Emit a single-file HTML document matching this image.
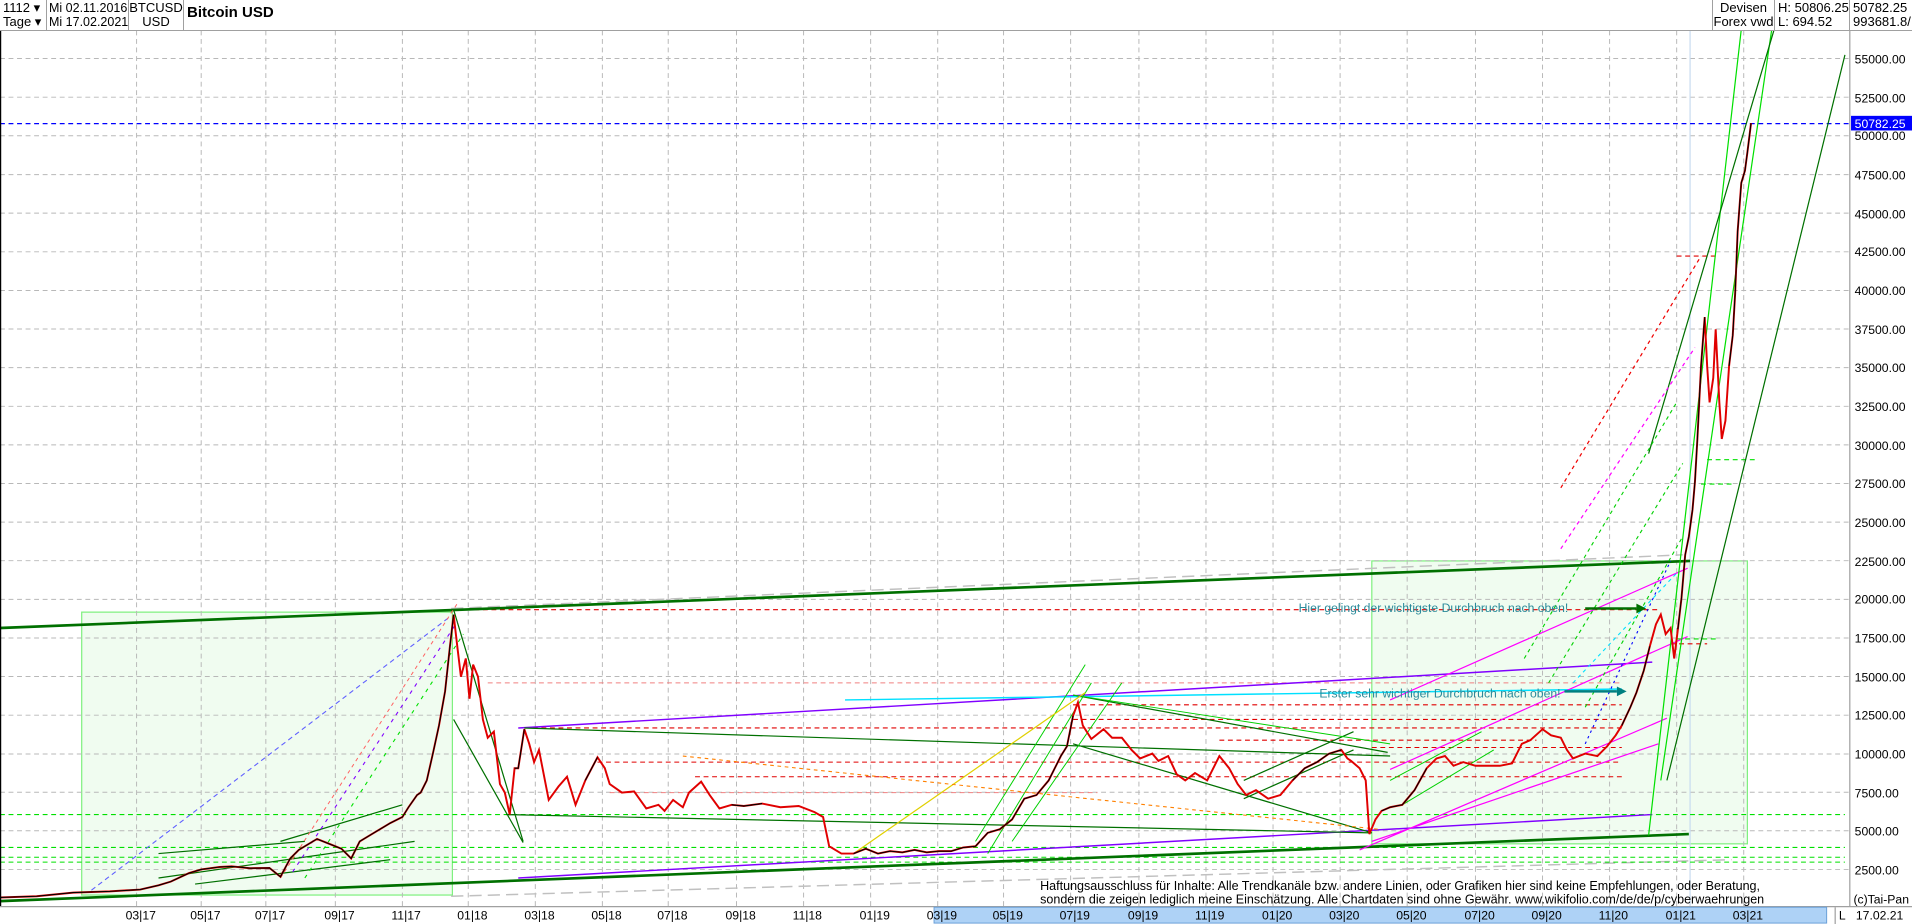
<!DOCTYPE html>
<html><head><meta charset="utf-8"><style>
html,body{margin:0;padding:0;background:#fff;width:1912px;height:924px;overflow:hidden;font-family:"Liberation Sans",sans-serif}
#hdr{position:absolute;left:0;top:0;width:1912px;height:30px;background:#fff;border-bottom:1px solid #a0a0a0;font-size:13px;color:#000}
.c{position:absolute;top:0;height:30px;border-right:1px solid #a0a0a0;line-height:14px;box-sizing:border-box;padding-top:1px;white-space:nowrap;overflow:hidden}
svg{position:absolute;left:0;top:0}
</style></head><body>
<svg width="1912" height="924" viewBox="0 0 1568 757.75" preserveAspectRatio="none" font-family="Liberation Sans, sans-serif">
<rect width="1568" height="758" fill="#fff"/>
<rect x="67" y="502" width="304" height="232" fill="#f0fcf0" stroke="#80f080" stroke-width="1"/>
<rect x="1125" y="460" width="308" height="232" fill="#f0fcf0" stroke="#80f080" stroke-width="1"/>
<g stroke="#b8b8b8" stroke-width="0.8" stroke-dasharray="4,3">
<path d="M0 48H1517M0 79.7H1517M0 111.3H1517M0 143.2H1517M0 174.8H1517M0 206.5H1517M0 238.2H1517M0 269.8H1517M0 301.5H1517M0 333.2H1517M0 364.8H1517M0 396.5H1517M0 428.2H1517M0 459.8H1517M0 491.5H1517M0 523.2H1517M0 554.8H1517M0 586.5H1517M0 618.3H1517M0 649.7H1517M0 681.3H1517M0 713H1517"/>
<path d="M112 25V743M165 25V743M218 25V743M275 25V743M330 25V743M384 25V743M439 25V743M494 25V743M548 25V743M604 25V743M659 25V743M714 25V743M769 25V743M823 25V743M878 25V743M934 25V743M989 25V743M1044 25V743M1099 25V743M1154 25V743M1210 25V743M1265 25V743M1320 25V743M1375 25V743M1430 25V743"/>
</g>
<line x1="1386" y1="25" x2="1386" y2="743" stroke="#c8dcf0" stroke-width="1"/>
<path d="M370 499L1380 455" stroke="#c0c0c0" stroke-width="1.2" stroke-dasharray="10,5" fill="none"/>
<path d="M370 735L1420 705" stroke="#c0c0c0" stroke-width="1.2" stroke-dasharray="10,5" fill="none"/>
<g stroke="#00e000" stroke-width="0.9" stroke-dasharray="4,3" fill="none">
<path d="M0 668H1513M0 695H1513M0 703H1513M0 707H1513M1375 524H1410M1400 377H1440M1395 397H1420"/>
</g>
<g stroke="#e00000" stroke-width="0.9" stroke-dasharray="4,3" fill="none">
<path d="M375 500H1362M430 597H1330M490 625H1330M570 637H1330M880 578H1330M880 590H1330M1000 607H1260M1125 613H1330M1375 210H1410M1370 528H1400"/>
</g>
<path d="M400 560H1330M500 650H900" stroke="#f08080" stroke-width="0.8" stroke-dasharray="4,3"/>
<path d="M0 101.4H1517" stroke="#0000ff" stroke-width="1" stroke-dasharray="4,3"/>
<path d="M0 515L1386 460" stroke="#007000" stroke-width="2.2"/>
<path d="M0 739L1385 684" stroke="#007000" stroke-width="2.2"/>
<path d="M425 720L1355 668" stroke="#8000ff" stroke-width="1.2"/>
<path d="M425 597L1355 543" stroke="#8000ff" stroke-width="1.2"/>
<path d="M693 574L1330 565" stroke="#00e0ff" stroke-width="1.2"/>
<g stroke="#ff00ff" stroke-width="1" fill="none">
<path d="M1140 574L1384 466M1140 631L1384 522M1115 697L1367 589M1125 690L1360 610"/>
</g>
<g stroke="#007000" stroke-width="1" fill="none">
<path d="M372 500L429 690M372 590L429 691M430 597L1140 620M415 668L1125 683M880 570L1138 617M880 610L1125 683M130 700L250 690M130 720L340 690M160 725L320 705M230 690L330 660M1020 640L1110 600M1020 655L1110 615"/>
</g>
<g stroke="#00d000" stroke-width="0.8" fill="none">
<path d="M800 690L890 545M810 700L895 560M830 690L920 560M880 570L1140 610M1140 640L1215 600M1150 660L1225 615"/>
</g>
<path d="M700 700L890 568" stroke="#e0d000" stroke-width="1"/>
<path d="M560 620L1130 680" stroke="#ff8000" stroke-width="0.9" stroke-dasharray="3,3"/>
<path d="M75 730L370 505" stroke="#6060ff" stroke-width="0.9" stroke-dasharray="4,3"/>
<path d="M230 720L375 495" stroke="#ff6060" stroke-width="0.8" stroke-dasharray="3,3"/>
<path d="M240 715L375 510" stroke="#8000ff" stroke-width="0.9" stroke-dasharray="3,4"/>
<path d="M250 720L380 520" stroke="#00e000" stroke-width="0.9" stroke-dasharray="3,4"/>
<g fill="none">
<path d="M1352 685L1428 24M1362 640L1453 24" stroke="#00e000" stroke-width="1"/>
<path d="M1352 372L1455 24M1367 640L1513 45" stroke="#007000" stroke-width="1"/>
<path d="M1280 400L1395 210" stroke="#f00000" stroke-width="1" stroke-dasharray="3,3"/>
<path d="M1280 450L1390 285" stroke="#ff00ff" stroke-width="1" stroke-dasharray="3,3"/>
<path d="M1250 540L1375 330M1270 560L1380 380M1300 580L1380 440" stroke="#00d000" stroke-width="0.9" stroke-dasharray="3,3"/>
<path d="M1290 560L1375 470" stroke="#00e0ff" stroke-width="0.9" stroke-dasharray="3,3"/>
<path d="M1300 610L1370 460" stroke="#0000ff" stroke-width="0.9" stroke-dasharray="2,3"/>
</g>
<path fill="none" stroke="#e00000" stroke-width="1.6" d="M0 736L30 735L60 732L90 731L115 729.5L130 726L140 723L155 716L165 713L180 711L190 710.5L205 712L221 711.8L230 719L238 704L245 697L260 688L270 692L280 696L288 704L295 690L305 684L320 675L330 670L335 662L342 652L345 650L350 640L355 618L360 595L365 567L369 530L372 504L375 530L378 555L382 540L385 573L388 545L392 555L396 590L400 605L405 600L410 643L414 650L418 668L422 630L425 630L430 598L434 610L438 625L442 615L450 656L458 645L465 637L472 660L480 640L490 621L496 630L500 643L510 650L520 649L530 663L540 660L545 665L552 656L560 662L565 650L575 641L582 652L590 663L600 660L610 661L625 659L640 662L655 661L668 666L675 670L680 694L690 700L700 700L710 696L720 700L730 698L740 699L750 697L760 699L770 698L780 698L790 695L800 694L810 683L820 680L830 672L840 655L850 652L860 640L870 620L875 612L880 587L884 576L888 595L895 606L905 598L912 605L920 605L928 615L935 622L945 618L950 624L958 620L965 635L972 640L980 634L990 640L1000 620L1008 630L1015 643L1022 652L1030 648L1040 655L1050 652L1060 640L1070 630L1080 625L1090 618L1100 615L1105 622L1108 624L1115 630L1120 640L1123 684L1128 672L1133 665L1140 662L1150 660L1160 648L1170 630L1178 622L1185 620L1192 628L1200 625L1210 628L1220 628L1230 628L1240 626L1248 610L1255 607L1265 598L1272 603L1280 605L1285 615L1290 622L1300 618L1310 620L1318 612L1325 603L1330 595L1337 580L1342 568L1348 550L1353 530L1358 512L1362 504L1366 520L1370 515L1373 540L1376 516L1379 490L1382 455L1385 440L1388 418L1390 395L1392 360L1395 300L1398 260L1400 300L1402 330L1405 310L1407 270L1410 330L1412 360L1415 345L1418 300L1421 275L1423 240L1425 190L1428 150L1431 140L1433 125L1436 101"/>
<path fill="none" stroke="#000" stroke-width="0.9" d="M0 736L30 735L60 732L90 731L115 729.5L130 726L140 723L155 716L165 713L180 711L190 710.5L205 712L221 711.8L230 719L238 704L245 697L260 688L270 692L280 696L288 704L295 690L305 684L320 675L330 670L335 662L342 652L345 650L350 640L355 618L360 595L365 567L369 530L372 504M422 630L425 630L430 598M480 640L490 621M600 660L610 661L625 659M700 700L710 696L720 700L730 698L740 699L750 697L760 699L770 698L780 698L790 695L800 694L810 683L820 680L830 672L840 655L850 652L860 640L870 620L875 612L880 587M1060 640L1070 630L1080 625L1090 618L1100 615M1133 665L1140 662L1150 660L1160 648L1170 630M1330 595L1337 580L1342 568L1348 550L1353 530M1376 516L1379 490L1382 455L1385 440L1388 418L1390 395L1392 360L1395 300L1398 260M1418 300L1421 275L1423 240L1425 190L1428 150L1431 140L1433 125L1436 101"/>
<text x="1065" y="502" font-size="10" fill="#2a8a9a">Hier gelingt der wichtigste Durchbruch nach oben!</text>
<path d="M1300 499H1342" stroke="#007000" stroke-width="2"/><path d="M1342 495L1350 499L1342 503Z" fill="#007000"/>
<text x="1082" y="572" font-size="10" fill="#2a8a9a">Erster sehr wichtiger Durchbruch nach oben!</text>
<path d="M1283 567H1326" stroke="#008080" stroke-width="2"/><path d="M1326 563L1334 567L1326 571Z" fill="#008080"/>
<text font-size="10.6" fill="#000" transform="translate(853 730) scale(0.97 1)">Haftungsausschluss für Inhalte: Alle Trendkanäle bzw. andere Linien, oder Grafiken hier sind keine Empfehlungen, oder Beratung,</text>
<text font-size="10.6" fill="#000" transform="translate(853 741) scale(0.97 1)">sondern die zeigen lediglich meine  Einschätzung. Alle Chartdaten sind ohne Gewähr.  www.wikifolio.com/de/de/p/cyberwaehrungen</text>
<rect x="1517" y="25" width="51" height="718" fill="#fff"/>
<line x1="1517" y1="25" x2="1517" y2="758" stroke="#a0a0a0" stroke-width="1"/>
<g font-size="10" fill="#000">
<text x="1521" y="52">55000.00</text><text x="1521" y="84">52500.00</text><text x="1521" y="115">50000.00</text><text x="1521" y="147">47500.00</text><text x="1521" y="179">45000.00</text><text x="1521" y="210">42500.00</text><text x="1521" y="242">40000.00</text><text x="1521" y="274">37500.00</text><text x="1521" y="305">35000.00</text><text x="1521" y="337">32500.00</text><text x="1521" y="369">30000.00</text><text x="1521" y="400">27500.00</text><text x="1521" y="432">25000.00</text><text x="1521" y="464">22500.00</text><text x="1521" y="495">20000.00</text><text x="1521" y="527">17500.00</text><text x="1521" y="559">15000.00</text><text x="1521" y="590">12500.00</text><text x="1521" y="622">10000.00</text><text x="1521" y="654">7500.00</text><text x="1521" y="685">5000.00</text><text x="1521" y="717">2500.00</text>
<text x="1520" y="741">(c)Tai-Pan</text>
</g>
<rect x="1518" y="95" width="50" height="12" fill="#0000ff"/>
<text x="1521" y="105" font-size="10" fill="#fff">50782.25</text>
<rect x="0" y="743" width="1568" height="15" fill="#fff"/>
<line x1="0" y1="743.5" x2="1568" y2="743.5" stroke="#a0a0a0"/>
<rect x="766" y="744" width="732" height="13" fill="#aed2f6" stroke="#6aa0d8" stroke-width="0.8"/>
<line x1="1505" y1="744" x2="1505" y2="758" stroke="#a0a0a0"/>
<g font-size="10" fill="#000">
<text x="103" y="754">03|17</text><text x="156" y="754">05|17</text><text x="209" y="754">07|17</text><text x="266" y="754">09|17</text><text x="321" y="754">11|17</text><text x="375" y="754">01|18</text><text x="430" y="754">03|18</text><text x="485" y="754">05|18</text><text x="539" y="754">07|18</text><text x="595" y="754">09|18</text><text x="650" y="754">11|18</text><text x="705" y="754">01|19</text><text x="760" y="754">03|19</text><text x="814" y="754">05|19</text><text x="869" y="754">07|19</text><text x="925" y="754">09|19</text><text x="980" y="754">11|19</text><text x="1035" y="754">01|20</text><text x="1090" y="754">03|20</text><text x="1145" y="754">05|20</text><text x="1201" y="754">07|20</text><text x="1256" y="754">09|20</text><text x="1311" y="754">11|20</text><text x="1366" y="754">01|21</text><text x="1421" y="754">03|21</text>
<text x="1508" y="754">L</text><text x="1522" y="754">17.02.21</text>
</g>
<line x1="0.5" y1="25" x2="0.5" y2="743" stroke="#000" stroke-width="1"/>
</svg>
<div id="hdr">
<div class="c" style="left:0;width:47px;padding-left:3px">1112 ▾<br>Tage ▾</div>
<div class="c" style="left:47px;width:82px;padding-left:2px;font-size:12.5px">Mi 02.11.2016<br>Mi 17.02.2021</div>
<div class="c" style="left:129px;width:55px;text-align:center">BTCUSD<br>USD</div>
<div style="position:absolute;left:187px;top:4px;font-weight:bold;font-size:15px">Bitcoin USD</div>
<div class="c" style="left:1712px;width:63px;border-left:1px solid #a0a0a0;text-align:center">Devisen<br>Forex vwd</div>
<div class="c" style="left:1775px;width:75px;padding-left:3px">H: 50806.25<br>L: 694.52</div>
<div class="c" style="left:1850px;width:62px;padding-left:3px;border-right:none">50782.25<br>993681.8/</div>
</div>
</body></html>
